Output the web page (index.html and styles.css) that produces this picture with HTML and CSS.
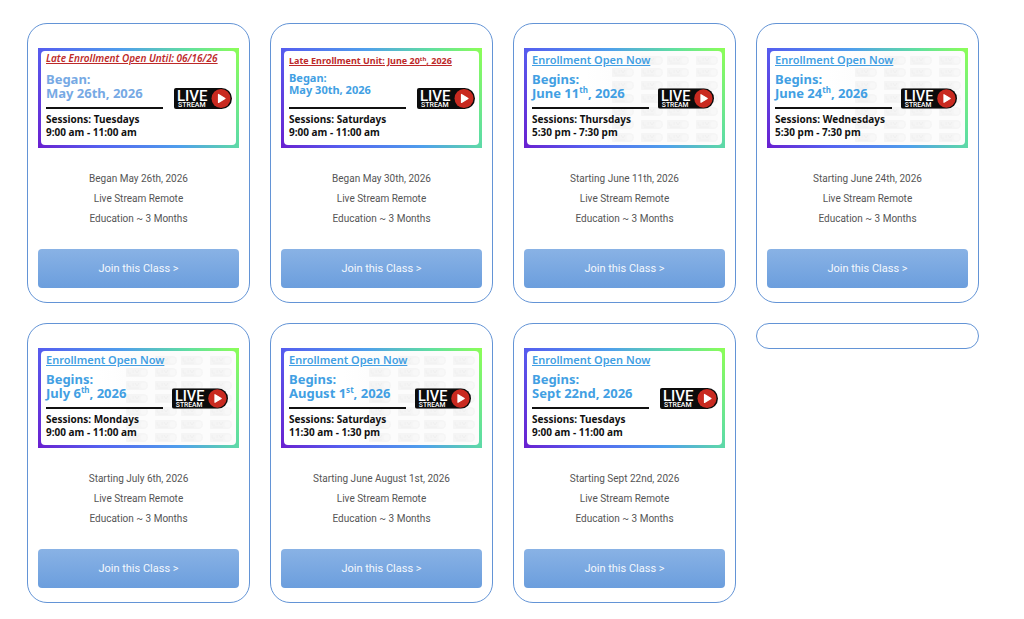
FILE: index.html
```html
<!DOCTYPE html>
<html lang="en">
<head>
<meta charset="utf-8">
<meta name="viewport" content="width=device-width, initial-scale=1">
<title>Live Stream Classes</title>
<link rel="stylesheet" href="styles.css">
</head>
<body>
<svg class="defs" aria-hidden="true">
  <symbol id="live" viewBox="0 0 58 21">
    <path d="M2 0H47.500a10.500 10.500 0 0 1 0 21H2a2 2 0 0 1-2-2V2a2 2 0 0 1 2-2z" fill="#0c0c0c"/>
    <circle cx="47" cy="10.500" r="9.500" fill="#c92a20"/>
    <path d="M44.500 6.500v8l6.500-4z" fill="#fff" stroke="#fff" stroke-width="1.200" stroke-linejoin="round"/>
  </symbol>
  <symbol id="mark" viewBox="0 0 22 9">
    <path d="M1 0H17.500a4.500 4.500 0 0 1 0 9H1a1 1 0 0 1-1-1V1a1 1 0 0 1 1-1z" fill="#f5f5f5"/>
    <path d="M2 2v3h3M7 2v3M9 2l2 3 2-3M3 7h10" fill="none" stroke="#f0f0f0"/>
    <circle cx="17.500" cy="4.500" r="3" fill="#f8f8f8"/>
  </symbol>
  <symbol id="row" viewBox="0 0 108 9">
    <use href="#mark" x="0" width="22" height="9"/>
    <use href="#mark" x="29" width="22" height="9"/>
    <use href="#mark" x="55" width="22" height="9"/>
    <use href="#mark" x="84" width="22" height="9"/>
  </symbol>
  <symbol id="pattern" viewBox="0 0 110 94">
    <use href="#mark" x="29" y="5" width="22" height="9"/>
    <use href="#mark" x="55" y="5" width="22" height="9"/>
    <use href="#mark" x="84" y="5" width="22" height="9"/>
    <use href="#row" y="17" width="108" height="9"/>
    <use href="#row" y="30" width="108" height="9"/>
    <use href="#row" y="43" width="108" height="9"/>
    <use href="#row" y="56" width="108" height="9"/>
    <use href="#row" y="69" width="108" height="9"/>
    <use href="#row" y="82" width="108" height="9"/>
  </symbol>
</svg>

<main class="classes">
  <article class="card">
    <div class="banner"><div class="panel">
      <p class="status late slanted">Late Enrollment Open Until: 06/16/26</p>
      <h2 class="when pale">Began:<br>May 26th, 2026</h2>
      <svg class="logo" viewBox="0 0 58 21"><use href="#live"/><text class="live-big" x="3" y="13">LIVE</text><text class="live-small" x="4" y="19">STREAM</text></svg>
      <p class="sessions">Sessions: Tuesdays<br>9:00 am - 11:00 am</p>
    </div></div>
    <p class="details">Began May 26th, 2026<br>Live Stream Remote<br>Education ~ 3 Months</p>
    <a class="join" href="#">Join this Class &gt;</a>
  </article>

  <article class="card">
    <div class="banner"><div class="panel">
      <p class="status late">Late Enrollment Unit: June 20<sup>th</sup>, 2026</p>
      <h2 class="when compact">Began:<br>May 30th, 2026</h2>
      <svg class="logo" viewBox="0 0 58 21"><use href="#live"/><text class="live-big" x="3" y="13">LIVE</text><text class="live-small" x="4" y="19">STREAM</text></svg>
      <p class="sessions">Sessions: Saturdays<br>9:00 am - 11:00 am</p>
    </div></div>
    <p class="details">Began May 30th, 2026<br>Live Stream Remote<br>Education ~ 3 Months</p>
    <a class="join" href="#">Join this Class &gt;</a>
  </article>

  <article class="card">
    <div class="banner"><div class="panel patterned">
      <svg class="pattern" aria-hidden="true"><use href="#pattern"/></svg>
      <p class="status">Enrollment Open Now</p>
      <h2 class="when">Begins:<br>June 11<sup>th</sup>, 2026</h2>
      <svg class="logo" viewBox="0 0 58 21"><use href="#live"/><text class="live-big" x="3" y="13">LIVE</text><text class="live-small" x="4" y="19">STREAM</text></svg>
      <p class="sessions">Sessions: Thursdays<br>5:30 pm - 7:30 pm</p>
    </div></div>
    <p class="details">Starting June 11th, 2026<br>Live Stream Remote<br>Education ~ 3 Months</p>
    <a class="join" href="#">Join this Class &gt;</a>
  </article>

  <article class="card">
    <div class="banner"><div class="panel patterned">
      <svg class="pattern" aria-hidden="true"><use href="#pattern"/></svg>
      <p class="status">Enrollment Open Now</p>
      <h2 class="when">Begins:<br>June 24<sup>th</sup>, 2026</h2>
      <svg class="logo" viewBox="0 0 58 21"><use href="#live"/><text class="live-big" x="3" y="13">LIVE</text><text class="live-small" x="4" y="19">STREAM</text></svg>
      <p class="sessions">Sessions: Wednesdays<br>5:30 pm - 7:30 pm</p>
    </div></div>
    <p class="details">Starting June 24th, 2026<br>Live Stream Remote<br>Education ~ 3 Months</p>
    <a class="join" href="#">Join this Class &gt;</a>
  </article>

  <article class="card">
    <div class="banner"><div class="panel patterned">
      <svg class="pattern" aria-hidden="true"><use href="#pattern"/></svg>
      <p class="status">Enrollment Open Now</p>
      <h2 class="when">Begins:<br>July 6<sup>th</sup>, 2026</h2>
      <svg class="logo" viewBox="0 0 58 21"><use href="#live"/><text class="live-big" x="3" y="13">LIVE</text><text class="live-small" x="4" y="19">STREAM</text></svg>
      <p class="sessions">Sessions: Mondays<br>9:00 am - 11:00 am</p>
    </div></div>
    <p class="details">Starting July 6th, 2026<br>Live Stream Remote<br>Education ~ 3 Months</p>
    <a class="join" href="#">Join this Class &gt;</a>
  </article>

  <article class="card">
    <div class="banner"><div class="panel patterned">
      <svg class="pattern" aria-hidden="true"><use href="#pattern"/></svg>
      <p class="status">Enrollment Open Now</p>
      <h2 class="when">Begins:<br>August 1<sup>st</sup>, 2026</h2>
      <svg class="logo" viewBox="0 0 58 21"><use href="#live"/><text class="live-big" x="3" y="13">LIVE</text><text class="live-small" x="4" y="19">STREAM</text></svg>
      <p class="sessions">Sessions: Saturdays<br>11:30 am - 1:30 pm</p>
    </div></div>
    <p class="details">Starting June August 1st, 2026<br>Live Stream Remote<br>Education ~ 3 Months</p>
    <a class="join" href="#">Join this Class &gt;</a>
  </article>

  <article class="card">
    <div class="banner"><div class="panel">
      <p class="status">Enrollment Open Now</p>
      <h2 class="when">Begins:<br>Sept 22nd, 2026</h2>
      <svg class="logo" viewBox="0 0 58 21"><use href="#live"/><text class="live-big" x="3" y="13">LIVE</text><text class="live-small" x="4" y="19">STREAM</text></svg>
      <p class="sessions">Sessions: Tuesdays<br>9:00 am - 11:00 am</p>
    </div></div>
    <p class="details">Starting Sept 22nd, 2026<br>Live Stream Remote<br>Education ~ 3 Months</p>
    <a class="join" href="#">Join this Class &gt;</a>
  </article>

  <article class="card empty"></article>
</main>
</body>
</html>
```

FILE: styles.css
```css
* { box-sizing: border-box; }
body { margin: 0; background: #fff; color: #555; font-family: Roboto, "Liberation Sans", sans-serif; }
p, h2 { margin: 0; }
.defs { position: absolute; width: 0; height: 0; }

.classes {
  display: grid;
  grid-template-columns: repeat(4, minmax(0, 1fr));
  align-items: start;
  gap: 20px;
  padding: 23px 45px 16px 27px;
}
.card {
  display: flex;
  flex-direction: column;
  padding: 24px 10px 14px;
  border: 1px solid #6394d6;
  border-radius: 20px;
}
.card.empty { padding: 12px 10px; }

.banner {
  padding: 3px;
  background: linear-gradient(60deg, #6a1fd0 0%, #5560f0 24%, #4f9fec 55%, #60dfa0 80%, #8dff55 100%);
}
.panel {
  position: relative;
  display: grid;
  grid-template-columns: 117px 1fr;
  grid-template-rows: 16px 42px auto;
  padding: 0 4px 6px 5px;
  border-radius: 4px;
  background: #fff;
  color: #111;
  font-family: "Noto Sans", "Open Sans", sans-serif;
  font-weight: 700;
}
.patterned { padding-right: 8px; background: linear-gradient(90deg, #fff 30%, #fcfcfc 50%); }
.pattern { position: absolute; right: 0; top: 0; width: 110px; height: 94px; }
.panel > :not(.pattern) { position: relative; }
.panel sup { font-size: 8px; line-height: 0; vertical-align: 5px; }

.status {
  grid-column: 1 / -1;
  color: #429fe3;
  font-size: 11px;
  font-weight: 600;
  line-height: 17px;
  text-decoration: underline;
  white-space: nowrap;
}
.status.late { color: #bd2929; font-size: 9px; font-weight: 700; line-height: 19px; }
.status.slanted { font-size: 10px; font-weight: 600; font-style: italic; line-height: 14px; }
.status sup { font-size: 6px; vertical-align: 3px; }
.when {
  padding-top: 5px;
  border-bottom: 2px solid #111;
  color: #429fe3;
  font-size: 13px;
  line-height: 14px;
  white-space: nowrap;
}
.when.pale { color: #76a9e4; }
.when.compact { font-size: 11px; line-height: 12px; }
.logo { justify-self: end; align-self: end; width: 58px; height: 21px; }
.patterned .logo { width: 56px; }
.live-big { fill: #fff; font: 500 15px Roboto, sans-serif; }
.live-small { fill: #fff; font: 500 7px Roboto, sans-serif; }
.sessions {
  grid-column: 1 / -1;
  padding-top: 4px;
  font-size: 10px;
  line-height: 13px;
}

.details {
  padding: 21px 0 20px;
  font-size: 10px;
  line-height: 20px;
  text-align: center;
}
.join {
  padding: 10px 10px 9px;
  border-radius: 4px;
  background: linear-gradient(#89b2e5, #6b9edd);
  color: #f4f8fd;
  font-size: 11px;
  line-height: 20px;
  text-align: center;
  text-decoration: none;
}
```
